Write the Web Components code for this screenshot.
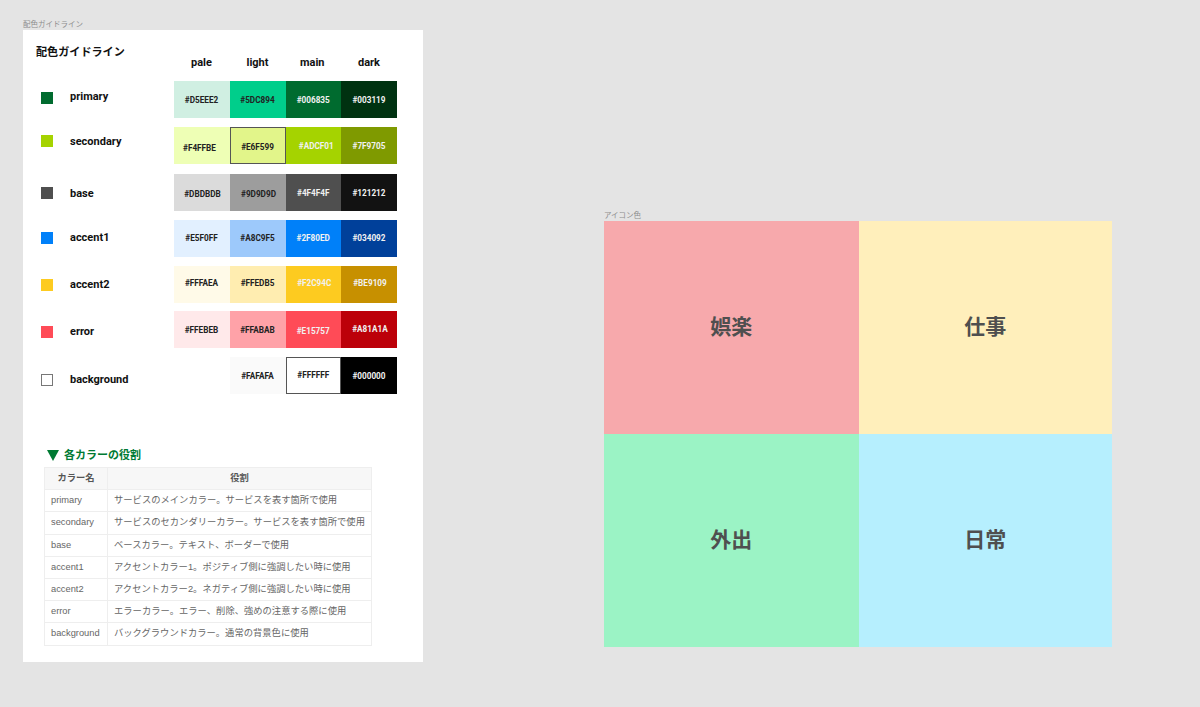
<!DOCTYPE html>
<html lang="ja"><head><meta charset="utf-8"><title>配色ガイドライン</title>
<style>
html,body{margin:0;height:100%;overflow:hidden;background:#e4e4e4}
</style></head><body>
<canvas-board>
  <canvas-frame label="配色ガイドライン" x="23" y="30" w="400" h="632" bg="#fff">
    <guide-header></guide-header>
    <color-row name="primary" sq="#006B2F" sqt="10.5" lt="9" gap="0"
      cells="#D0EFE2,#D5EEE2,d;#00CE8B,#5DC894,d;#006B2F,#006835,l;#003211,#003119,l"></color-row>
    <color-row name="secondary" sq="#A5D300" sqt="8" lt="8" gap="9"
      cells="#EEFFB5,#F4FFBE,d,-2,2;#E2F58A,#E6F599,d,0,1,b;#A5D300,#ADCF01,l,3,0;#7F9A00,#7F9705,l"></color-row>
    <color-row name="base" sq="#4F4F4F" sqt="12.5" lt="13" gap="10"
      cells="#DBDBDB,#DBDBDB,d,1,1;#9D9D9D,#9D9D9D,d,1,1;#4F4F4F,#4F4F4F,l,0,0;#121212,#121212,l"></color-row>
    <color-row name="accent1" sq="#0080F9" sqt="12" lt="11" gap="9"
      cells="#E2F0FF,#E5F0FF,d,0,-1;#9DC9FB,#A8C9F5,d,0,-1;#0080F9,#2F80ED,l,0,-1;#00409A,#034092,l,0,-1"></color-row>
    <color-row name="accent2" sq="#FDCB20" sqt="13.5" lt="12" gap="8.5"
      cells="#FFFAE8,#FFFAEA,d,0,-1;#FFEDB0,#FFEDB5,d,0,-1;#FDCB20,#F2C94C,l,1,-1;#C79000,#BE9109,l,1,-1"></color-row>
    <color-row name="error" sq="#FF4B57" sqt="15" lt="14" gap="8.5"
      cells="#FFE9EA,#FFEBEB,d,0,0;#FFA2A8,#FFABAB,d,0,0;#FF4B57,#E15757,l,0,1;#BC0009,#A81A1A,l,1,-1"></color-row>
    <color-row name="background" sq="#fff" sqb="1" sqt="17" lt="16" gap="9"
      cells="#fff,,d;#FAFAFA,#FAFAFA,d;#fff,#FFFFFF,d,0,-1,b;#000,#000000,l"></color-row>
    <role-table></role-table>
  </canvas-frame>
  <canvas-frame label="アイコン色" x="604" y="221" w="508" h="426" bg="transparent">
    <tile-grid>
      <icon-tile color="#F7A9AC">娯楽</icon-tile>
      <icon-tile color="#FFEFBB">仕事</icon-tile>
      <icon-tile color="#9BF3C5">外出</icon-tile>
      <icon-tile color="#B6EFFE">日常</icon-tile>
    </tile-grid>
  </canvas-frame>
</canvas-board>
<script>
const JP='"Noto Sans CJK JP",sans-serif';
const LATIN='Roboto,"Noto Sans CJK JP",sans-serif';
function def(name,html,init){
  customElements.define(name,class extends HTMLElement{
    constructor(){super();this.attachShadow({mode:'open'}).innerHTML=html;}
    connectedCallback(){if(init)init(this,this.shadowRoot);}
  });
}
def('canvas-board',`<style>:host{display:block;position:relative;width:1200px;height:707px;background:#e4e4e4;overflow:hidden}</style><slot></slot>`);
def('canvas-frame',`<style>
:host{display:block;position:absolute;box-sizing:border-box}
.label{position:absolute;left:0;top:-12px;font:7.5px/11px ${JP};color:#8e8e8e;white-space:nowrap}
.body{display:flex;flex-direction:column;width:100%;height:100%}
</style><div class="label"></div><div class="body"><slot></slot></div>`,(el,s)=>{
  const a=n=>el.getAttribute(n);
  el.style.left=a('x')+'px';el.style.top=a('y')+'px';el.style.width=a('w')+'px';el.style.height=a('h')+'px';el.style.background=a('bg');
  s.querySelector('.label').textContent=a('label');
});
def('guide-header',`<style>
:host{display:grid;grid-template-columns:150.5px 56px 56px 55.5px 56px;height:51px;font-family:${LATIN};color:#111}
h1{margin:0;padding:14px 0 0 13px;font:700 11.1px/14px ${JP};white-space:nowrap}
span{padding-top:26px;font-weight:700;font-size:11px;line-height:14px;text-align:center}
</style><h1>配色ガイドライン</h1><span>pale</span><span>light</span><span style="padding-right:2px">main</span><span>dark</span>`);
def('color-row',`<style>
:host{display:grid;grid-template-columns:150.5px 56px 56px 55.5px 56px;height:37px}
.left{display:flex;align-items:flex-start;padding-left:18px}
.sq{box-sizing:border-box;width:12px;height:12px;flex:none}
.name{margin-left:17px;font:700 11px/14px ${LATIN};color:#111}
.cell{box-sizing:border-box;display:flex;align-items:center;justify-content:center;font:700 8.2px/12px Roboto,sans-serif;white-space:nowrap}
.b{border:1px solid #555}
.d{color:#222}.l{color:#f1f1f1}
</style><div class="left"><div class="sq"></div><div class="name"></div></div>`,(el,s)=>{
  if(s.querySelector('.cell'))return;
  const a=n=>el.getAttribute(n);
  el.style.marginTop=a('gap')+'px';
  const sq=s.querySelector('.sq'),nm=s.querySelector('.name');
  sq.style.background=a('sq');sq.style.marginTop=a('sqt')+'px';
  if(a('sqb'))sq.style.border='1px solid #777';
  nm.textContent=a('name');nm.style.marginTop=a('lt')+'px';
  a('cells').split(';').forEach(c=>{
    const [bg,code,tone,dx,dy,b]=c.split(',');
    const d=document.createElement('div');
    d.className='cell '+tone+(b?' b':'');
    d.style.background=bg;d.textContent=code;
    const x=+dx||0,y=+dy||0;
    if(x>0)d.style.paddingLeft=2*x+'px';if(x<0)d.style.paddingRight=-2*x+'px';
    if(y>0)d.style.paddingTop=2*y+'px';if(y<0)d.style.paddingBottom=-2*y+'px';
    s.appendChild(d);
  });
});
const ROLES=[['primary','サービスのメインカラー。サービスを表す箇所で使用'],['secondary','サービスのセカンダリーカラー。サービスを表す箇所で使用'],['base','ベースカラー。テキスト、ボーダーで使用'],['accent1','アクセントカラー1。ポジティブ側に強調したい時に使用'],['accent2','アクセントカラー2。ネガティブ側に強調したい時に使用'],['error','エラーカラー。エラー、削除、強めの注意する際に使用'],['background','バックグラウンドカラー。通常の背景色に使用']];
def('role-table',`<style>
:host{display:block;padding:53px 0 0 21px}
h2{display:flex;align-items:center;gap:5px;margin:0 0 6px 3px;font:700 11px/14px ${JP};color:#007A33}
svg{width:12px;height:11px;flex:none;margin-top:2px}
table{border-collapse:collapse;table-layout:fixed;width:328px;font:9.3px/13px "Liberation Sans","Noto Sans CJK JP",sans-serif;color:#666}
th,td{border:1px solid #eee;padding:0 0 0 6px;height:21.2px;white-space:nowrap;text-align:left;font-weight:400}
th{background:#f7f7f7;color:#555;font-weight:700;text-align:center;padding:0}
</style><h2><svg viewBox="0 0 12 11"><path d="M0 0H12L6 11Z" fill="#007A33"/></svg>各カラーの役割</h2>
<table><colgroup><col style="width:63px"><col></colgroup><thead><tr><th>カラー名</th><th>役割</th></tr></thead>
<tbody>${ROLES.map(r=>`<tr><td>${r[0]}</td><td>${r[1]}</td></tr>`).join('')}</tbody></table>`);
def('tile-grid',`<style>:host{display:grid;grid-template-columns:254.5px 253.5px;grid-template-rows:213px 213px;height:426px}</style><slot></slot>`);
def('icon-tile',`<style>:host{display:flex;align-items:center;justify-content:center;box-sizing:border-box;padding-bottom:6px;font:700 21px/30px ${JP};color:#4f4f4f}</style><slot></slot>`,el=>{el.style.background=el.getAttribute('color');});
</script>
</body></html>
